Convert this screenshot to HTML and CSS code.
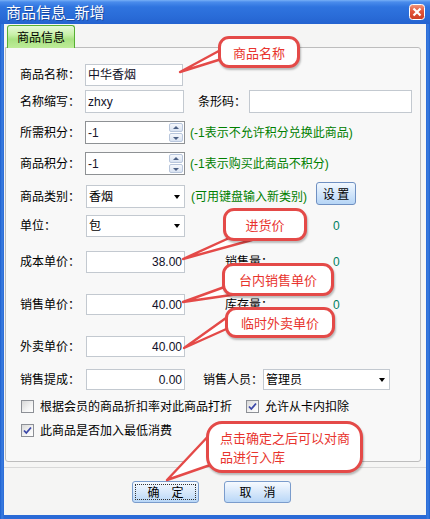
FILE: index.html
```html
<!DOCTYPE html>
<html lang="zh-CN">
<head>
<meta charset="utf-8">
<title>商品信息_新增</title>
<link rel="stylesheet" href="styles.css">
</head>
<body>
<div class="window">
  <div class="titlebar">
    <span class="title">商品信息_新增</span>
    <span class="close" aria-label="关闭">
      <svg width="16" height="16" viewBox="0 0 16 16">
        <defs>
          <linearGradient id="cg" x1="0" y1="0" x2="0" y2="1">
            <stop offset="0" stop-color="#f39a80"/>
            <stop offset="0.45" stop-color="#e2553a"/>
            <stop offset="1" stop-color="#cc3d22"/>
          </linearGradient>
        </defs>
        <rect x="0.5" y="0.5" width="15" height="15" rx="3" fill="url(#cg)" stroke="#fff"/>
        <path d="M4.5 4.5 L11.5 11.5 M11.5 4.5 L4.5 11.5" stroke="#fff" stroke-width="2.2"/>
      </svg>
    </span>
  </div>

  <div class="client">
    <div class="tabstrip"><div class="tab">商品信息</div></div>

    <div class="panel">
      <div class="row r1">
        <span class="lbl">商品名称：</span>
        <span class="field w98">中华香烟</span>
      </div>

      <div class="row r2">
        <span class="lbl">名称缩写：</span>
        <span class="field w99 tall">zhxy</span>
        <span class="lbl lbl-barcode">条形码：</span>
        <span class="field w163 tall"></span>
      </div>

      <div class="row r3">
        <span class="lbl">所需积分：</span>
        <span class="spin">
          <span class="spin-val">-1</span>
          <span class="spin-btns"><span class="sb up"></span><span class="sb down"></span></span>
        </span>
        <span class="note">(-1表示不允许积分兑换此商品)</span>
      </div>

      <div class="row r4">
        <span class="lbl">商品积分：</span>
        <span class="spin">
          <span class="spin-val">-1</span>
          <span class="spin-btns"><span class="sb up"></span><span class="sb down"></span></span>
        </span>
        <span class="note">(-1表示购买此商品不积分)</span>
      </div>

      <div class="row r5">
        <span class="lbl lbl66">商品类别：</span>
        <span class="combo tall">香烟<i class="caret"></i></span>
        <span class="note note-cat">(可用键盘输入新类别)</span>
        <span class="btn-set">设 置</span>
      </div>

      <div class="row r6">
        <span class="lbl lbl66">单位：</span>
        <span class="combo">包<i class="caret"></i></span>
        <span class="side"></span>
        <span class="zero">0</span>
      </div>

      <div class="row r7">
        <span class="lbl lbl66">成本单价：</span>
        <span class="field num">38.00</span>
        <span class="side">销售量：</span>
        <span class="zero">0</span>
      </div>

      <div class="row r8">
        <span class="lbl lbl66">销售单价：</span>
        <span class="field num short">40.00</span>
        <span class="side">库存量：</span>
        <span class="zero">0</span>
      </div>

      <div class="row r9">
        <span class="lbl lbl66">外卖单价：</span>
        <span class="field num short">40.00</span>
      </div>

      <div class="row r10">
        <span class="lbl lbl66">销售提成：</span>
        <span class="field num short">0.00</span>
        <span class="lbl lbl-staff">销售人员：</span>
        <span class="combo wide short">管理员<i class="caret"></i></span>
      </div>

      <div class="row check-row c1">
        <span class="check-item first"><span class="cbox"></span>根据会员的商品折扣率对此商品打折</span>
        <span class="check-item"><span class="cbox checked"><svg width="11" height="11" viewBox="0 0 11 11"><path d="M2 5.5 L4.3 8 L9 2.5" fill="none" stroke="#3b47a8" stroke-width="1.8"/></svg></span>允许从卡内扣除</span>
      </div>

      <div class="row check-row c2">
        <span class="check-item"><span class="cbox checked"><svg width="11" height="11" viewBox="0 0 11 11"><path d="M2 5.5 L4.3 8 L9 2.5" fill="none" stroke="#3b47a8" stroke-width="1.8"/></svg></span>此商品是否加入最低消费</span>
      </div>
    </div>

    <div class="footer">
      <span class="btn focus"><span class="btn-in">确　定</span></span>
      <span class="btn"><span class="btn-in">取　消</span></span>
    </div>
  </div>

  <svg class="pointers" width="430" height="519" viewBox="0 0 430 519">
    <g fill="#fff" stroke="#e44a48" stroke-width="2.4" stroke-linejoin="round">
      <polygon points="180,72 228,46 228,57"/>
      <polygon points="183,259 238,234 252,240"/>
      <polygon points="183,302 230,285 238,294"/>
      <polygon points="184,348 233,313 233,326"/>
      <polygon points="167,480 214,430 216,463"/>
    </g>
  </svg>

  <div class="callout co1">商品名称</div>
  <div class="callout co2">进货价</div>
  <div class="callout co3">台内销售单价</div>
  <div class="callout co4">临时外卖单价</div>
  <div class="callout co5">点击确定之后可以对商品进行入库</div>
</div>
</body>
</html>
```

FILE: styles.css
```css
* { box-sizing: border-box; }

html, body {
  margin: 0;
  padding: 0;
}

body {
  width: 430px;
  height: 519px;
  overflow: hidden;
  font-family: "Liberation Sans", "Noto Sans CJK SC", sans-serif;
  font-size: 12px;
  line-height: 14px;
  color: #000;
  background: #fff;
}

.window {
  position: relative;
  width: 430px;
  height: 519px;
  display: flex;
  flex-direction: column;
  padding: 0 4px 4px;
  background: linear-gradient(90deg, #1d5fcf 0, #3a7de0 2px, #2a6ad6 4px, #2a6ad6 426px, #3a7de0 428px, #1d5fcf 430px);
}

/* title bar */
.titlebar {
  height: 24px;
  margin: 0 -4px;
  padding: 0 5px 0 6px;
  display: flex;
  align-items: center;
  justify-content: space-between;
  background: linear-gradient(180deg, #78b0f6 0, #4a8cec 2px, #2f74df 7px, #2a6cd8 16px, #2463d0 24px);
}

.title {
  color: #fff;
  font-family: "Noto Sans CJK SC", sans-serif;
  font-size: 15px;
  line-height: 18px;
  text-shadow: 1px 1px 0 #1a4aa0;
}

.close {
  width: 16px;
  height: 16px;
  display: flex;
}

/* client area */
.client {
  flex: 1;
  display: flex;
  flex-direction: column;
  background: #f5f5f4;
}

.tabstrip {
  height: 23px;
  padding: 1px 0 0 3px;
  display: flex;
}

.tab {
  width: 68px;
  height: 23px;
  margin-bottom: -1px;
  position: relative;
  z-index: 1;
  padding-left: 9px;
  display: flex;
  align-items: center;
  font-family: "Noto Sans CJK SC", sans-serif;
  border: 1px solid #56b032;
  border-bottom: none;
  border-radius: 3px 3px 0 0;
  background: linear-gradient(180deg, #e6f9d8 0, #c8f0a8 40%, #a9e282 60%, #bdec98 100%);
}

.panel {
  margin-left: 1px;
  width: 416px;
  height: 415px;
  border: 1px solid #bdbdbd;
  border-radius: 0 3px 3px 3px;
  background: #f8f8f8;
  padding: 16px 0 0 14px;
  display: flex;
  flex-direction: column;
}

/* rows */
.row {
  display: flex;
  align-items: center;
  flex: none;
}

.r2 { margin-top: 4px; }
.r3 { margin-top: 8px; }
.r4 { margin-top: 8px; }
.r5 { margin-top: 10px; }
.r6 { margin-top: 7px; }
.r7 { margin-top: 14px; }
.r8 { margin-top: 21px; }
.r9 { margin-top: 21px; }
.r10 { margin-top: 12px; }
.c1 { margin-top: 9px; }
.c2 { margin-top: 9px; }

.lbl {
  width: 65px;
  flex: none;
  white-space: nowrap;
}

.lbl66 { width: 66px; }

.lbl-barcode {
  width: 51px;
  margin-left: 14px;
}

.lbl-staff {
  width: 60px;
  margin-left: 18px;
}

.field {
  height: 22px;
  width: 99px;
  flex: none;
  border: 1px solid #c3c9d0;
  background: #fff;
  padding: 0 2px;
  display: flex;
  align-items: center;
  color: #101028;
}

.field.tall { height: 23px; }
.field.short { height: 21px; }
.w98 { width: 98px; }
.w99 { width: 99px; }
.w163 { width: 163px; }

.field.num {
  justify-content: flex-end;
}

.spin {
  width: 100px;
  height: 23px;
  flex: none;
  display: flex;
  border: 1px solid #8e9194;
  background: #fff;
}

.spin-val {
  flex: 1;
  display: flex;
  align-items: center;
  padding-left: 2px;
  color: #18182c;
}

.spin-btns {
  width: 15px;
  display: flex;
  flex-direction: column;
  gap: 1px;
  padding: 1px 1px 1px 0;
}

.sb {
  flex: 1;
  position: relative;
  border: 1px solid #b8c6dc;
  border-radius: 2px;
  background: linear-gradient(180deg, #f6f8fc, #d9e3f2);
}

.sb::after {
  content: "";
  position: absolute;
  left: 50%;
  top: 50%;
  margin-left: -3px;
  border-left: 3px solid transparent;
  border-right: 3px solid transparent;
}

.sb.up::after {
  margin-top: -2px;
  border-bottom: 3px solid #4d6185;
}

.sb.down::after {
  margin-top: -1px;
  border-top: 3px solid #4d6185;
}

.note {
  color: #008000;
  margin-left: 5px;
  white-space: nowrap;
}

.note-cat {
  margin-left: 6px;
  width: 125px;
  flex: none;
}

.combo {
  width: 99px;
  height: 22px;
  flex: none;
  display: flex;
  align-items: center;
  justify-content: space-between;
  padding: 0 4px 0 2px;
  border: 1px solid #c3c9d0;
  background: #fff;
}

.combo.tall { height: 23px; }
.combo.short { height: 21px; }
.combo.wide { width: 127px; }

.caret {
  width: 0;
  height: 0;
  border-left: 3.5px solid transparent;
  border-right: 3.5px solid transparent;
  border-top: 4px solid #000;
}

.btn-set {
  width: 40px;
  height: 23px;
  align-self: flex-start;
  margin-top: -3px;
  display: flex;
  align-items: center;
  justify-content: center;
  border: 1px solid #6f90c2;
  border-radius: 3px;
  background: linear-gradient(180deg, #f2f8fe 0, #d6e8fb 45%, #b6d5f6 100%);
  font-family: "Noto Sans CJK SC", sans-serif;
}

.side {
  width: 108px;
  margin-left: 40px;
  flex: none;
  white-space: nowrap;
}

.zero {
  color: #008060;
}

/* checkboxes */
.check-row {
  height: 15px;
}

.check-item {
  display: flex;
  align-items: center;
  gap: 6px;
  white-space: nowrap;
}

.check-item.first {
  width: 225px;
  margin-left: 1px;
}

.c2 .check-item { margin-left: 1px; }

.cbox {
  width: 13px;
  height: 13px;
  flex: none;
  border: 1px solid #8d9096;
  background: linear-gradient(135deg, #d8d8d8 0, #f4f4f4 60%, #fff 100%);
  display: flex;
  align-items: center;
  justify-content: center;
}

/* footer */
.footer {
  flex: 1;
  margin-top: 5px;
  border-top: 1px solid #d8d8d8;
  display: flex;
  gap: 25px;
  padding: 13px 0 0 128px;
}

.btn {
  width: 67px;
  height: 22px;
  padding: 2px;
  border: 1px solid #7a9ccc;
  border-radius: 3px;
  background: linear-gradient(180deg, #f6faff 0, #dbeafb 45%, #b9d7f7 100%);
  font-family: "Noto Sans CJK SC", sans-serif;
}

.btn-in {
  display: flex;
  width: 100%;
  height: 100%;
  align-items: center;
  justify-content: center;
  border: 1px dotted transparent;
}

.btn.focus .btn-in {
  border-color: #333;
}

/* callouts */
.pointers {
  position: absolute;
  left: 0;
  top: 0;
  pointer-events: none;
}

.callout {
  position: absolute;
  display: flex;
  align-items: center;
  justify-content: center;
  background: #fff;
  border: 3px solid #e44a48;
  border-radius: 11px;
  box-shadow: 1px 2px 2px rgba(0, 0, 0, 0.25);
  color: #e8342e;
  font-family: "Noto Sans CJK SC", sans-serif;
  font-size: 13px;
  line-height: 19px;
}

.co1 { left: 218px; top: 36px; width: 82px; height: 32px; }
.co2 { left: 223px; top: 208px; width: 84px; height: 33px; }
.co3 { left: 222px; top: 263px; width: 112px; height: 33px; }
.co4 { left: 225px; top: 307px; width: 110px; height: 31px; }

.co5 {
  left: 206px;
  top: 421px;
  width: 157px;
  height: 52px;
  justify-content: flex-start;
  padding: 0 10px 0 11px;
  border-radius: 16px;
}
```
